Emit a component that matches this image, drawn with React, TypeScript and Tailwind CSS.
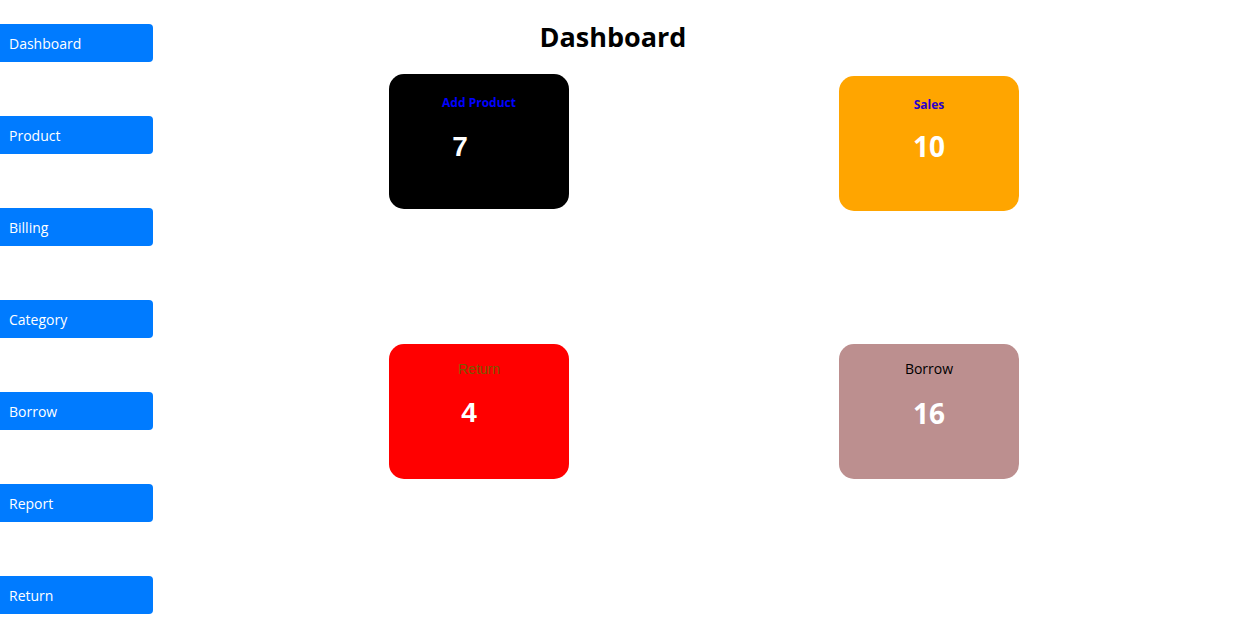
const menu = ['Dashboard', 'Product', 'Billing', 'Category', 'Borrow', 'Report', 'Return'];

function Card({
  bg,
  label,
  labelClass,
  value,
  valueClass,
  box,
}: {
  bg: string;
  label: string;
  labelClass: string;
  value: string;
  valueClass: string;
  box: string;
}) {
  return (
    <div className={`w-[180px] h-[135px] rounded-[15px] ${bg} ${box} flex flex-col items-center`}>
      <div className={`h-[18px] leading-[18px] ${labelClass}`}>{label}</div>
      <div className={`text-[28px] font-bold leading-[34px] text-white ${valueClass}`}>{value}</div>
    </div>
  );
}

export default function App() {
  return (
    <div className="flex min-h-[626px] bg-white font-['Segoe_UI','Open_Sans',sans-serif]">
      {/* Sidebar */}
      <div className="w-[153px] pt-[24px] flex flex-col gap-[54px]">
        {menu.map((m) => (
          <div
            key={m}
            className="h-[38px] bg-[#007bff] text-white text-[14px] rounded-r-[4px] flex items-center pl-[9px]"
          >
            {m}
          </div>
        ))}
      </div>

      {/* Main */}
      <div className="w-[920px]">
        <h1 className="text-center text-[27px] font-bold text-black leading-[34px] mt-[20px]">Dashboard</h1>
        <div className="grid grid-cols-[180px_180px] gap-x-[270px] ml-[236px] mt-[20px]">
          <Card
            bg="bg-black"
            label="Add Product"
            labelClass="text-[12px] font-bold text-[#0000ff]"
            value="7"
            valueClass="mt-[18px] -ml-[38px] font-['Liberation_Sans',sans-serif]"
            box="pt-[20px]"
          />
          <Card
            bg="bg-[#ffa500]"
            label="Sales"
            labelClass="text-[12px] font-bold text-[#2a00cc]"
            value="10"
            valueClass="mt-[15px]"
            box="mt-[2px] pt-[20px]"
          />
          <Card
            bg="bg-[#ff0000]"
            label="Return"
            labelClass="text-[14px] text-[#7a5a00] font-['Liberation_Sans',sans-serif]"
            value="4"
            valueClass="mt-[18px] -ml-[20px] font-['Liberation_Sans',sans-serif]"
            box="mt-[133px] pt-[16px]"
          />
          <Card
            bg="bg-[#bc8f8f]"
            label="Borrow"
            labelClass="text-[14px] text-black"
            value="16"
            valueClass="mt-[18px]"
            box="mt-[133px] pt-[16px]"
          />
        </div>
      </div>
    </div>
  );
}
